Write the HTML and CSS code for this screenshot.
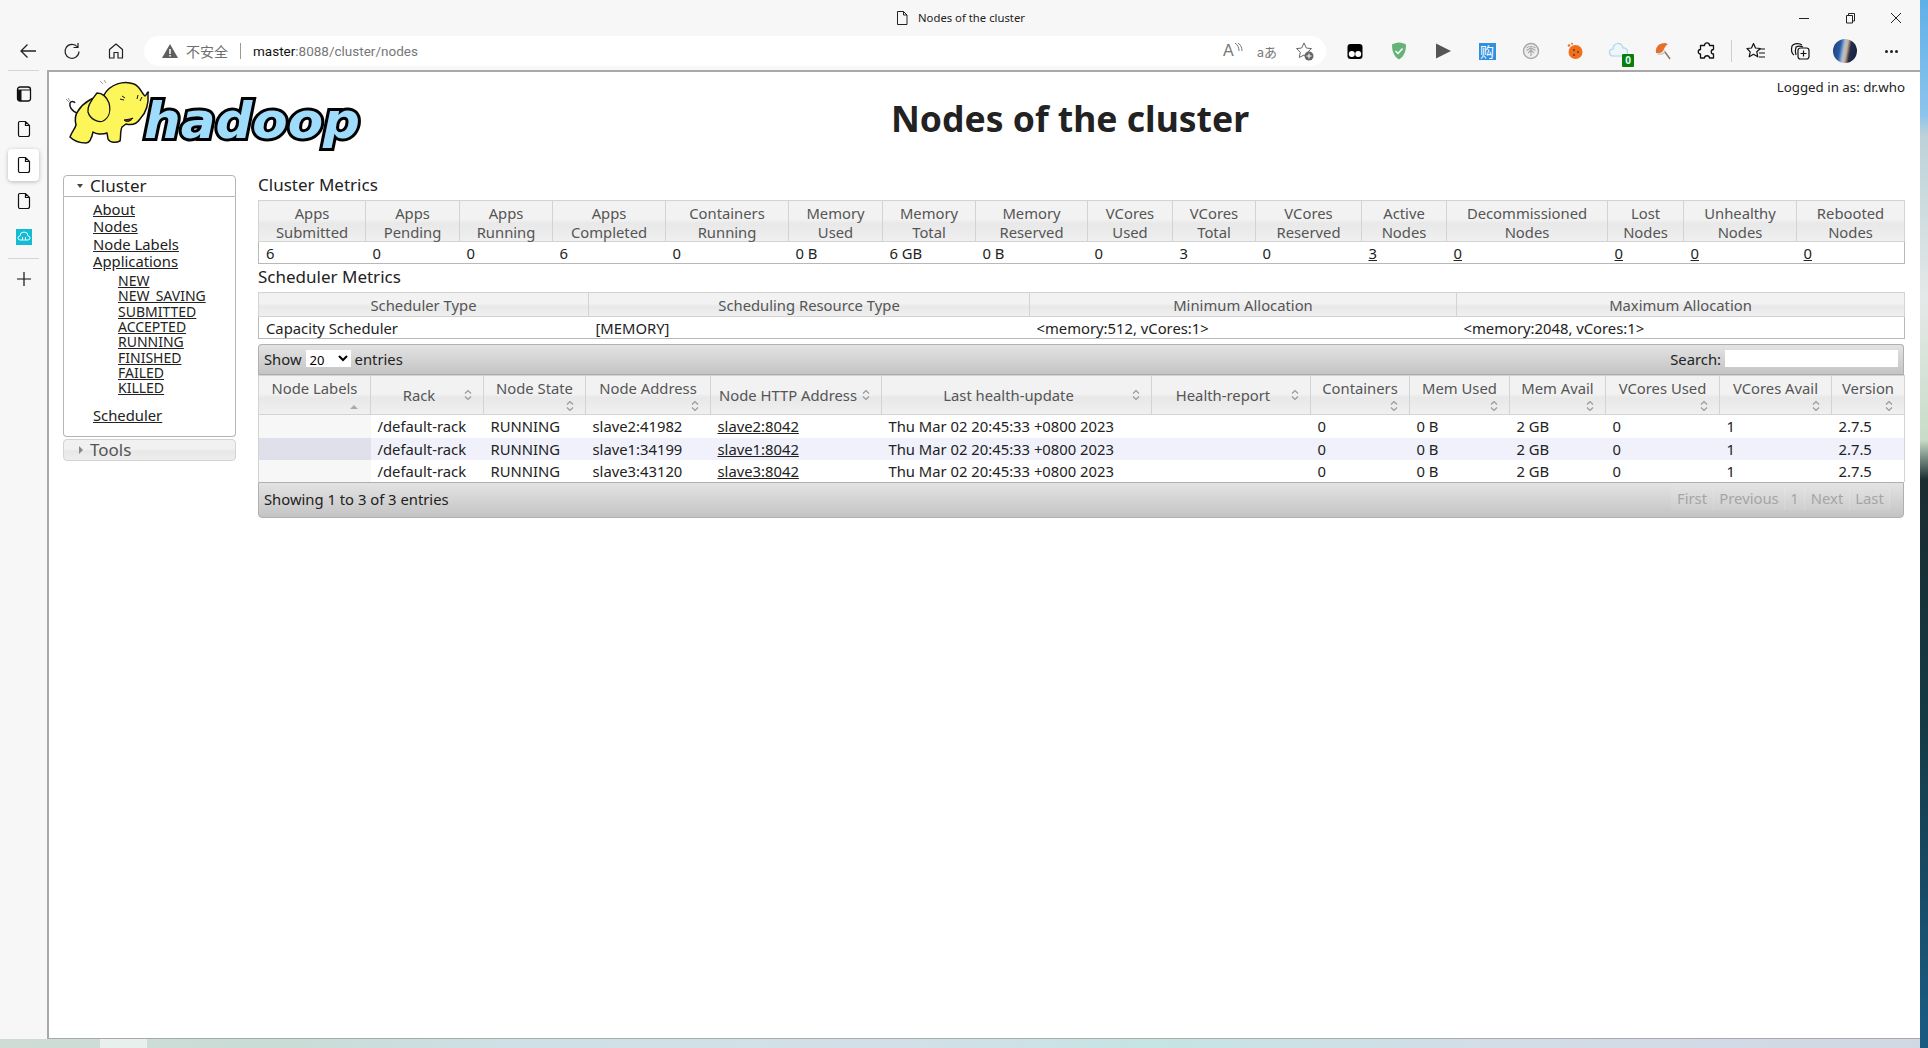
FILE: index.html
```html
<!DOCTYPE html>
<html lang="en">

<head>
    <meta charset="UTF-8">
    <title>Nodes of the cluster</title>
    <link rel="stylesheet" href="styles.css">
</head>

<body>
    <div class="browser">
        <div class="titlebar">
            <div></div>
            <div class="tab-title">
                <svg width="14" height="16" viewBox="0 0 14 16"><path d="M2.5 1.5h6l3.5 3.5v9.5h-9.500z M8.500 1.500v3.500h3.500" fill="none" stroke="#222" /></svg>
                <span>Nodes of the cluster</span>
            </div>
            <div class="win-controls">
                <svg width="46" height="16" viewBox="0 0 46 16"><path d="M18 8.500h10" stroke="#222" /></svg>
                <svg width="46" height="16" viewBox="0 0 46 16"><path d="M19.500 5.500h6v7.500h-6z M21.500 5.500v-2h6v7.500h-2" fill="none" stroke="#222" /></svg>
                <svg width="46" height="16" viewBox="0 0 46 16"><path d="M18 3l10 10M28 3l-10 10" stroke="#222" /></svg>
            </div>
        </div>

        <div class="toolbar">
            <div class="nav-btn"><svg width="20" height="20" viewBox="0 0 20 20"><path d="M18 10H3M9.500 3.500L3 10l6.500 6.500" fill="none" stroke="#222" stroke-width="1.300" /></svg></div>
            <div class="nav-btn"><svg width="20" height="20" viewBox="0 0 20 20"><path d="M15.500 6A7 7 0 1 0 17 10.500M16 2v4.500h-4.500" fill="none" stroke="#222" stroke-width="1.200" /></svg></div>
            <div class="nav-btn"><svg width="20" height="20" viewBox="0 0 20 20"><path d="M3.500 17V8.500L10 3l6.500 5.500V17h-4.500v-5.500h-4V17z" fill="none" stroke="#222" stroke-width="1.200" stroke-linejoin="round" /></svg></div>

            <div class="addr">
                <svg width="16" height="16" viewBox="0 0 16 16"><path d="M8 1L16 15H0z" fill="#5f5f5f" /><path d="M8 6v5M8 12v1.500" stroke="#fff" stroke-width="1.500" /></svg>
                <span class="insecure">不安全</span>
                <span class="addr-sep"></span>
                <span class="url"><b>master</b>:8088/cluster/nodes</span>
                <span class="addr-icons">
                    <span class="read">A<svg width="10" height="14" viewBox="0 0 10 14"><path d="M1 1c3 2 4 5 4 8M4 1c3 2 4 5 4 8" fill="none" stroke="#777" /></svg></span>
                    <span class="trans">aあ</span>
                    <svg width="20" height="20" viewBox="0 0 20 20"><path d="M10 2l2.300 5 5.200.600-3.800 3.600 1 5.300L10 14l-4.700 2.500 1-5.300L2.500 7.600 7.700 7z" fill="none" stroke="#666" /><circle cx="15" cy="15" r="4.500" fill="#666" /><path d="M15 12.500v5M12.500 15h5" stroke="#fff" /></svg>
                </span>
            </div>

            <div class="ext-list">
                <div class="ext"><svg width="20" height="20" viewBox="0 0 20 20"><rect x="2.500" y="3" width="15" height="15" rx="3" fill="#000" /><circle cx="6.800" cy="13" r="3" fill="#fff" /><circle cx="13.200" cy="13" r="3" fill="#fff" /></svg></div>
                <div class="ext"><svg width="20" height="20" viewBox="0 0 20 20"><path d="M10 1.500c3 0 5 1 7 2 0 7-2 12-7 15-5-3-7-8-7-15 2-1 4-2 7-2z" fill="#67b279" /><path d="M6.500 10l2.500 2.500 4.500-5" fill="none" stroke="#fff" stroke-width="1.500" /></svg></div>
                <div class="ext"><svg width="20" height="20" viewBox="0 0 20 20"><path d="M3 2.500l15 7.500-15 7.500z" fill="#555" /></svg></div>
                <div class="ext"><span class="gou">购</span></div>
                <div class="ext"><svg width="20" height="20" viewBox="0 0 20 20"><circle cx="10" cy="10" r="7.500" fill="#eee" stroke="#a9a9a9" stroke-width="1.500" /><path d="M10 7v8M5.500 7c2-2 7-2 9 0M5.500 9.500L10 7l4.500 2.500M7 12l3-3 3 3" fill="none" stroke="#a9a9a9" stroke-width="1.200" /></svg></div>
                <div class="ext"><svg width="20" height="20" viewBox="0 0 20 20"><circle cx="10.500" cy="11" r="7" fill="#ee6f1c" /><circle cx="4" cy="4.500" r="1.300" fill="#ee6f1c" /><circle cx="7" cy="2.800" r="1" fill="#ee6f1c" /><circle cx="9" cy="9" r="1" fill="#7b3408" /><circle cx="13" cy="11" r="1" fill="#7b3408" /><circle cx="9" cy="14" r="1" fill="#7b3408" /></svg></div>
                <div class="ext">
                    <svg width="22" height="20" viewBox="0 0 22 20"><path d="M5 15a3.500 3.500 0 0 1 0-7 5 5 0 0 1 10-1 4 4 0 0 1 1 8z" fill="#eef6fb" stroke="#a9d4ee" stroke-width="1.200" /></svg>
                    <span class="badge">0</span>
                </div>
                <div class="ext"><svg width="20" height="20" viewBox="0 0 20 20"><path d="M12 2C6 2 2 6 3 12c3 1 7 0 8-4 1-2 2-4 4-5z" fill="#e66f2e" /><path d="M5 13c3 1 5 0 7-2l-1-2" fill="none" stroke="#c9c9c9" stroke-width="1.500" /><path d="M12 11l5 7" stroke="#8a7a6a" stroke-width="1.500" /></svg></div>
                <div class="ext"><svg width="20" height="20" viewBox="0 0 20 20"><path d="M7.500 4.500c0-3.500 5-3.500 5 0h4v4c-3 0-3 4.500 0 4.500v4h-4c0-3-5-3-5 0h-4v-4c-3 0-3-4.500 0-4.500v-4z" fill="none" stroke="#111" stroke-width="1.300" stroke-linejoin="round" /></svg></div>
                <div class="ext-sep"></div>
                <div class="ext"><svg width="22" height="20" viewBox="0 0 22 20"><path d="M8.500 2.500l2 4.500 4.800.500-3.500 3.300 1 5-4.300-2.500-4.300 2.500 1-5L2 7.500 6.500 7z" fill="none" stroke="#111" stroke-width="1.200" stroke-linejoin="round" /><path d="M14 8h6M14 12h6M14 16h6" stroke="#111" stroke-width="1.200" /></svg></div>
                <div class="ext"><svg width="22" height="22" viewBox="0 0 22 22"><path d="M5 15c-3-2-3-5-2-9 1-2 5-3 8-2l2 1" fill="none" stroke="#111" stroke-width="1.200" /><path d="M7 15c-1-3-1-5 0-8 2-1 5-1 7 0" fill="none" stroke="#111" stroke-width="1.200" /><rect x="9" y="8" width="11" height="11" rx="2.500" fill="#f7f7f7" stroke="#111" stroke-width="1.200" /><path d="M14.500 10.500v6M11.500 13.500h6" stroke="#111" stroke-width="1.200" /></svg></div>
                <div class="ext avatar-wrap"><span class="avatar"></span></div>
                <div class="ext more"><span></span><span></span><span></span></div>
            </div>
        </div>

        <div class="content-row">
            <div class="rail">
                <div class="rail-sep"></div>
                <div class="rail-item short"><svg width="16" height="18" viewBox="0 0 16 18"><rect x="1.500" y="2" width="13" height="14" rx="2.500" fill="none" stroke="#111" stroke-width="1.300" /><path d="M1.500 5h13" stroke="#111" /><path d="M2 5h3.500v11H3.500a2 2 0 0 1-2-2z" fill="#111" /></svg></div>
                <div class="rail-item"><svg class="doc" width="14" height="18" viewBox="0 0 14 18"><path d="M2.500 1.500h6l4 4v9a2 2 0 0 1-2 2h-8a1.500 1.500 0 0 1-1-1.500v-12a1.500 1.500 0 0 1 1-1.500zM8.500 1.500v4h4" fill="none" stroke="#111" stroke-width="1.200" /></svg></div>
                <div class="rail-item active"><svg class="doc" width="14" height="18" viewBox="0 0 14 18"><path d="M2.500 1.500h6l4 4v9a2 2 0 0 1-2 2h-8a1.500 1.500 0 0 1-1-1.500v-12a1.500 1.500 0 0 1 1-1.500zM8.500 1.500v4h4" fill="none" stroke="#111" stroke-width="1.200" /></svg></div>
                <div class="rail-item"><svg class="doc" width="14" height="18" viewBox="0 0 14 18"><path d="M2.500 1.500h6l4 4v9a2 2 0 0 1-2 2h-8a1.500 1.500 0 0 1-1-1.500v-12a1.500 1.500 0 0 1 1-1.500zM8.500 1.500v4h4" fill="none" stroke="#111" stroke-width="1.200" /></svg></div>
                <div class="rail-item"><svg width="16" height="16" viewBox="0 0 16 16"><rect width="16" height="16" fill="#12bcd4" /><path d="M4 11a2 2 0 0 1 0-4 4 4 0 0 1 8 0 2 2 0 0 1 0 4zM6.500 8v3M9.500 8v3" fill="none" stroke="#e8fbff" /></svg></div>
                <div class="rail-sep lower"></div>
                <div class="rail-item"><svg width="16" height="16" viewBox="0 0 16 16"><path d="M8 1v14M1 8h14" stroke="#111" stroke-width="1.200" /></svg></div>
            </div>

            <div class="page">
                <div class="header">
                    <div class="logo">
                        <svg width="310" height="85" viewBox="0 0 310 85">
                            <text class="logo-text" x="84" y="63" textLength="216" lengthAdjust="spacingAndGlyphs">hadoop</text>
                            <path d="M17 38C12 36 9 32 10 28c1-2 4-2 5 0" fill="none" stroke="#111" stroke-width="1.500" />
                            <path d="M6 24l3 3M8 23l2 3M40 6l3 3M44 5l2 3" stroke="#999" />
                            <path d="M18 36c6-10 16-14 26-16C50 9 64 5 74 9c6 2 8 10 11 12 1 0 1-2 3-4 1 0 0 1 0 1 1 12-2 20-8 26-4 6-10 6-14 5l-4 3c-2 4-1 10-2 14-4 2-10 2-12-2l-1-6c-5 2-11 1-14-1-1 5-3 11-7 11-6 0-12-2-16-6 2-6 5-8 6-12-1-4-1-10 2-14z" fill="#fdf65a" stroke="#111" stroke-width="1.500" stroke-linejoin="round" />
                            <path d="M37 18c-5 6-10 14-9 19 2 7 10 11 15 9 6-3 8-10 6-18-2-5-6-10-12-10z" fill="#fdf65a" stroke="#111" stroke-width="1.300" />
                            <path d="M60 24l4 1M62 21l3 2M78 20l-1 4M82 22l-2 4" stroke="#111" />
                            <path d="M64 45c3 3 7 1 9-2l-3 1z" fill="#7a2b10" stroke="#111" />
                        </svg>
                    </div>
                    <h1>Nodes of the cluster</h1>
                    <div class="login">Logged in as: dr.who</div>
                </div>

                <div class="layout">
                    <div class="nav">
                        <div class="nav-head open"><span class="arrow-down"></span>Cluster</div>
                        <div class="nav-box">
                            <ul class="nav-links">
                                <li><a href="#">About</a></li>
                                <li><a href="#">Nodes</a></li>
                                <li><a href="#">Node Labels</a></li>
                                <li><a href="#">Applications</a>
                                    <ul class="nav-sub">
                                        <li><a href="#">NEW</a></li>
                                        <li><a href="#">NEW_SAVING</a></li>
                                        <li><a href="#">SUBMITTED</a></li>
                                        <li><a href="#">ACCEPTED</a></li>
                                        <li><a href="#">RUNNING</a></li>
                                        <li><a href="#">FINISHED</a></li>
                                        <li><a href="#">FAILED</a></li>
                                        <li><a href="#">KILLED</a></li>
                                    </ul>
                                </li>
                                <li class="sched-link"><a href="#">Scheduler</a></li>
                            </ul>
                        </div>
                        <div class="nav-head closed"><span class="arrow-right"></span>Tools</div>
                    </div>

                    <div class="main">
                        <div class="section-title first">Cluster Metrics</div>
                        <table class="info cluster-table">
                            <colgroup><col><col><col><col><col><col><col><col><col><col><col><col><col><col><col><col></colgroup>
                            <thead>
                                <tr>
                                    <th>Apps<br>Submitted</th>
                                    <th>Apps<br>Pending</th>
                                    <th>Apps<br>Running</th>
                                    <th>Apps<br>Completed</th>
                                    <th>Containers<br>Running</th>
                                    <th>Memory<br>Used</th>
                                    <th>Memory<br>Total</th>
                                    <th>Memory<br>Reserved</th>
                                    <th>VCores<br>Used</th>
                                    <th>VCores<br>Total</th>
                                    <th>VCores<br>Reserved</th>
                                    <th>Active<br>Nodes</th>
                                    <th>Decommissioned<br>Nodes</th>
                                    <th>Lost<br>Nodes</th>
                                    <th>Unhealthy<br>Nodes</th>
                                    <th>Rebooted<br>Nodes</th>
                                </tr>
                            </thead>
                            <tbody>
                                <tr>
                                    <td>6</td><td>0</td><td>0</td><td>6</td><td>0</td><td>0 B</td><td>6 GB</td><td>0 B</td><td>0</td><td>3</td><td>0</td>
                                    <td><a href="#">3</a></td><td><a href="#">0</a></td><td><a href="#">0</a></td><td><a href="#">0</a></td><td><a href="#">0</a></td>
                                </tr>
                            </tbody>
                        </table>

                        <div class="section-title">Scheduler Metrics</div>
                        <table class="info sched-table">
                            <colgroup><col><col><col><col></colgroup>
                            <thead>
                                <tr>
                                    <th>Scheduler Type</th>
                                    <th>Scheduling Resource Type</th>
                                    <th>Minimum Allocation</th>
                                    <th>Maximum Allocation</th>
                                </tr>
                            </thead>
                            <tbody>
                                <tr>
                                    <td>Capacity Scheduler</td>
                                    <td>[MEMORY]</td>
                                    <td>&lt;memory:512, vCores:1&gt;</td>
                                    <td>&lt;memory:2048, vCores:1&gt;</td>
                                </tr>
                            </tbody>
                        </table>

                        <div class="nodes-wrap">
                            <div class="bar bar-top">
                                <label class="bar-label">Show
                                    <select>
                                        <option>20</option>
                                    </select>
                                    entries</label>
                                <label class="bar-label">Search: <input type="text"></label>
                            </div>
                            <table class="nodes-table">
                                <colgroup><col><col><col><col><col><col><col><col><col><col><col><col><col></colgroup>
                                <thead>
                                    <tr>
                                        <th class="sorted">Node Labels</th>
                                        <th class="sort side">Rack</th>
                                        <th class="sort">Node State</th>
                                        <th class="sort">Node Address</th>
                                        <th class="sort side">Node HTTP Address</th>
                                        <th class="sort side">Last health-update</th>
                                        <th class="sort side">Health-report</th>
                                        <th class="sort">Containers</th>
                                        <th class="sort">Mem Used</th>
                                        <th class="sort">Mem Avail</th>
                                        <th class="sort">VCores Used</th>
                                        <th class="sort">VCores Avail</th>
                                        <th class="sort">Version</th>
                                    </tr>
                                </thead>
                                <tbody>
                                    <tr>
                                        <td class="first-col"></td>
                                        <td>/default-rack</td>
                                        <td>RUNNING</td>
                                        <td>slave2:41982</td>
                                        <td><a href="#">slave2:8042</a></td>
                                        <td>Thu Mar 02 20:45:33 +0800 2023</td>
                                        <td></td>
                                        <td>0</td>
                                        <td>0 B</td>
                                        <td>2 GB</td>
                                        <td>0</td>
                                        <td>1</td>
                                        <td>2.7.5</td>
                                    </tr>
                                    <tr class="even">
                                        <td class="first-col"></td>
                                        <td>/default-rack</td>
                                        <td>RUNNING</td>
                                        <td>slave1:34199</td>
                                        <td><a href="#">slave1:8042</a></td>
                                        <td>Thu Mar 02 20:45:33 +0800 2023</td>
                                        <td></td>
                                        <td>0</td>
                                        <td>0 B</td>
                                        <td>2 GB</td>
                                        <td>0</td>
                                        <td>1</td>
                                        <td>2.7.5</td>
                                    </tr>
                                    <tr>
                                        <td class="first-col"></td>
                                        <td>/default-rack</td>
                                        <td>RUNNING</td>
                                        <td>slave3:43120</td>
                                        <td><a href="#">slave3:8042</a></td>
                                        <td>Thu Mar 02 20:45:33 +0800 2023</td>
                                        <td></td>
                                        <td>0</td>
                                        <td>0 B</td>
                                        <td>2 GB</td>
                                        <td>0</td>
                                        <td>1</td>
                                        <td>2.7.5</td>
                                    </tr>
                                </tbody>
                            </table>
                            <div class="bar bar-bottom">
                                <span>Showing 1 to 3 of 3 entries</span>
                                <div class="pager">
                                    <span class="pg-first">First</span>
                                    <span class="pg-prev">Previous</span>
                                    <span class="pg-num">1</span>
                                    <span class="pg-next">Next</span>
                                    <span class="pg-last">Last</span>
                                </div>
                            </div>
                        </div>
                    </div>
                </div>
            </div>
        </div>
    </div>
    <div class="taskbar">
        <div class="task-active"></div>
    </div>
</body>

</html>
```
FILE: styles.css
```css
html,
body {
    height: 100%;
}

body {
    margin: 0;
    height: 1048px;
    overflow: hidden;
    font-family: "Noto Sans", Arial, sans-serif;
    font-size: 14.8px;
    color: #222;
    background: linear-gradient(#5fb0e8 0, #8cc4ec 115px, #bcd2d8 135px, #e4e9e8 300px, #c8dcc8 440px, #1a2c30 480px, #143a44 720px, #1a5a80 1020px);
}

.browser {
    width: 1920px;
    height: 1039px;
    display: flex;
    flex-direction: column;
    background-color: #f7f7f7;
}

/* title bar */

.titlebar {
    height: 35px;
    display: grid;
    grid-template-columns: 1fr auto 1fr;
    align-items: center;
    flex-shrink: 0;
}

.tab-title {
    display: flex;
    align-items: center;
    gap: 9px;
    font-size: 11.300px;
    color: #222;
}

.win-controls {
    display: flex;
    justify-content: flex-end;
    padding-right: 1px;
}

/* toolbar */

.toolbar {
    height: 35px;
    display: flex;
    align-items: flex-start;
    padding-left: 6px;
    flex-shrink: 0;
}

.nav-btn {
    width: 44px;
    height: 32px;
    display: flex;
    align-items: center;
    justify-content: center;
}

.addr {
    width: 1164px;
    height: 30px;
    margin: 1px 0 0 6px;
    padding: 0 0 0 18px;
    display: flex;
    align-items: center;
    background-color: #fff;
    border-radius: 15px;
    font-size: 12.500px;
    color: #777;
}

.insecure {
    margin-left: 8px;
    font-family: "Noto Sans CJK SC", sans-serif;
    font-size: 14px;
    color: #6e6e6e;
}

.addr-sep {
    width: 1px;
    height: 16px;
    margin: 0 12px;
    background-color: #999;
}

.url {
    font-family: Roboto, sans-serif;
    font-size: 13.500px;
}

.url b {
    font-weight: normal;
    color: #111;
}

.addr-icons {
    margin-left: auto;
    padding-right: 12px;
    display: flex;
    align-items: center;
    gap: 13px;
}

.read {
    display: flex;
    align-items: flex-start;
    font-size: 16px;
    font-family: "Liberation Sans", sans-serif;
    color: #777;
}

.trans {
    margin-right: 4px;
    font-family: "Noto Sans CJK JP", sans-serif;
    font-size: 13px;
    color: #777;
}

.ext-list {
    display: flex;
    align-items: center;
    height: 32px;
    margin-left: 7px;
}

.ext {
    position: relative;
    width: 44px;
    height: 32px;
    display: flex;
    align-items: center;
    justify-content: center;
}

.ext-sep {
    width: 1px;
    height: 22px;
    margin: 0 2px;
    background-color: #cfcfcf;
}

.gou {
    width: 17px;
    height: 17px;
    display: flex;
    align-items: center;
    justify-content: center;
    background-color: #2f8fe0;
    font-family: "Noto Sans CJK SC", sans-serif;
    font-size: 14px;
    line-height: 1;
    color: #fff;
}

.badge {
    position: absolute;
    right: 7px;
    bottom: 0;
    width: 12px;
    height: 13px;
    background-color: #0a7d0a;
    border-radius: 1px;
    font-size: 10px;
    line-height: 13px;
    font-weight: bold;
    text-align: center;
    color: #dff;
}

.avatar-wrap {
    margin-left: 1px;
}

.avatar {
    width: 24px;
    height: 24px;
    border-radius: 50%;
    background: linear-gradient(100deg, #1d3f78 0, #2a5aa0 30%, #a9c0dc 45%, #d0b090 55%, #232c48 68%, #142042 100%);
}

.more {
    gap: 2px;
    margin-left: 2px;
}

.more span {
    width: 3px;
    height: 3px;
    border-radius: 50%;
    background-color: #222;
}

/* left rail and page frame */

.content-row {
    flex: 1;
    display: flex;
    min-height: 0;
}

.rail {
    width: 47px;
    flex-shrink: 0;
    display: flex;
    flex-direction: column;
    align-items: center;
    gap: 4px;
}

.rail-sep {
    width: 31px;
    height: 1px;
    margin-bottom: 4px;
    background-color: #d5d5d5;
}

.rail-sep.lower {
    margin: 1px 0 0;
}

.rail-item {
    width: 31px;
    height: 32px;
    display: flex;
    align-items: center;
    justify-content: center;
    flex-shrink: 0;
}

.rail-item.short {
    height: 30px;
}

.rail-item.active {
    background-color: #fff;
    border-radius: 4px;
    box-shadow: 0 1px 4px rgba(0, 0, 0, 0.25);
}

.page {
    flex: 1;
    min-width: 0;
    display: flex;
    flex-direction: column;
    background-color: #fff;
    border-top: 2px solid #a9a9a9;
    border-left: 2px solid #a9a9a9;
    border-bottom: 1px solid #a9a9a9;
}

/* page header */

.header {
    height: 98px;
    display: flex;
    flex-shrink: 0;
}

.logo {
    width: 321px;
    padding: 3px 0 0 11px;
    box-sizing: border-box;
}

.logo-text {
    font-family: "DejaVu Sans", sans-serif;
    font-size: 50px;
    font-weight: bold;
    font-style: italic;
    fill: #9fdcfb;
    stroke: #000;
    stroke-width: 6px;
    paint-order: stroke;
}

h1 {
    flex: 1;
    margin: 26px 0 0;
    font-size: 35.500px;
    line-height: 40px;
    text-align: center;
    color: #222;
}

.login {
    width: 135px;
    padding: 6px 15px 0 0;
    font-size: 13.300px;
    line-height: 18px;
    text-align: right;
    white-space: nowrap;
}

/* sidebar */

.layout {
    display: flex;
    padding: 0 15px 0 14px;
    gap: 22px;
}

.nav {
    width: 173px;
    flex-shrink: 0;
    padding-top: 5px;
}

.nav-head {
    height: 22px;
    box-sizing: border-box;
    display: flex;
    align-items: center;
    font-size: 17px;
    line-height: 20px;
    border: 1px solid #b5b5b5;
    padding-left: 13px;
}

.nav-head.open {
    border-radius: 4px 4px 0 0;
    background-color: #fff;
    color: #222;
}

.nav-head.closed {
    margin-top: 2px;
    border-color: #d3d3d3;
    border-radius: 4px;
    background: linear-gradient(#f1f1f1 45%, #e7e7e7 55%, #eee 100%);
    color: #555;
}

.arrow-down {
    width: 0;
    height: 0;
    margin-right: 7px;
    border-style: solid;
    border-width: 4px 3.500px 0;
    border-color: #444 transparent transparent;
}

.arrow-right {
    width: 0;
    height: 0;
    margin: 0 7px 0 2px;
    border-style: solid;
    border-width: 4px 0 4px 4px;
    border-color: transparent transparent transparent #888;
}

.nav-box {
    height: 240px;
    box-sizing: border-box;
    border: 1px solid #b5b5b5;
    border-top: 0;
    border-radius: 0 0 4px 4px;
}

.nav-links,
.nav-sub {
    list-style: none;
    margin: 0;
    padding: 0;
}

.nav-links {
    padding: 4px 0 0 29px;
    font-size: 14.800px;
    line-height: 17.300px;
}

.nav-sub {
    margin: 3px 0 0;
    padding-left: 25px;
    font-size: 14px;
    line-height: 15.300px;
}

.sched-link {
    margin-top: 11px;
}

a {
    color: #222;
}

/* tables */

.main {
    width: 1646px;
    flex-shrink: 0;
}

.section-title {
    height: 28px;
    font-size: 17px;
    line-height: 26px;
}

.section-title.first {
    height: 30px;
    line-height: 30px;
}

table {
    width: 1646px;
    table-layout: fixed;
    border-collapse: collapse;
    white-space: nowrap;
}

th {
    padding: 0;
    font-weight: normal;
    color: #555;
    background: linear-gradient(#f2f2f2 45%, #e8e8e8 55%, #f0f0f0 100%);
    border: 1px solid #d3d3d3;
}

td {
    padding: 0 0 0 7px;
    overflow: hidden;
}

.info {
    border: 1px solid #b8b8b8;
}

.info th {
    line-height: 18.500px;
    padding-top: 1px;
}

.cluster-table th {
    padding-top: 3px;
}

.cluster-table td {
    padding-top: 1px;
}

.cluster-table thead tr {
    height: 41px;
}

.cluster-table tbody tr {
    height: 22px;
}

.sched-table thead tr {
    height: 24px;
}

.sched-table tbody tr {
    height: 22px;
}

.cluster-table col:nth-child(1) { width: 107px; }
.cluster-table col:nth-child(2) { width: 94px; }
.cluster-table col:nth-child(3) { width: 93px; }
.cluster-table col:nth-child(4) { width: 113px; }
.cluster-table col:nth-child(5) { width: 123px; }
.cluster-table col:nth-child(6) { width: 94px; }
.cluster-table col:nth-child(7) { width: 93px; }
.cluster-table col:nth-child(8) { width: 112px; }
.cluster-table col:nth-child(9) { width: 85px; }
.cluster-table col:nth-child(10) { width: 83px; }
.cluster-table col:nth-child(11) { width: 106px; }
.cluster-table col:nth-child(12) { width: 85px; }
.cluster-table col:nth-child(13) { width: 161px; }
.cluster-table col:nth-child(14) { width: 76px; }
.cluster-table col:nth-child(15) { width: 113px; }
.cluster-table col:nth-child(16) { width: 108px; }

.sched-table col:nth-child(1) { width: 330px; }
.sched-table col:nth-child(2) { width: 441px; }
.sched-table col:nth-child(3) { width: 427px; }
.sched-table col:nth-child(4) { width: 448px; }

.nodes-table col:nth-child(1) { width: 112px; }
.nodes-table col:nth-child(2) { width: 113px; }
.nodes-table col:nth-child(3) { width: 102px; }
.nodes-table col:nth-child(4) { width: 125px; }
.nodes-table col:nth-child(5) { width: 171px; }
.nodes-table col:nth-child(6) { width: 270px; }
.nodes-table col:nth-child(7) { width: 159px; }
.nodes-table col:nth-child(8) { width: 99px; }
.nodes-table col:nth-child(9) { width: 100px; }
.nodes-table col:nth-child(10) { width: 96px; }
.nodes-table col:nth-child(11) { width: 114px; }
.nodes-table col:nth-child(12) { width: 112px; }
.nodes-table col:nth-child(13) { width: 73px; }

/* nodes table and its bars */

.nodes-wrap {
    margin-top: 5px;
}

.bar {
    display: flex;
    align-items: center;
    justify-content: space-between;
    box-sizing: border-box;
    padding: 0 5px;
    border: 1px solid #b0b0b0;
    background: linear-gradient(#e3e3e3, #c4c4c4);
}

.bar-top {
    height: 31px;
    padding-bottom: 2px;
    border-radius: 4px 4px 0 0;
    border-bottom-color: #aaa;
}

.bar-bottom {
    height: 36px;
    padding-bottom: 2px;
    border-radius: 0 0 4px 4px;
}

.bar-label {
    display: flex;
    align-items: center;
    gap: 4px;
}

select {
    width: 45px;
    height: 17px;
    padding: 0;
    border: 0;
    background-color: #fff;
    font-family: inherit;
    font-size: 13px;
}

input {
    width: 173px;
    height: 17px;
    padding: 0;
    border: 0;
    background-color: #fff;
}

.nodes-table {
    border-left: 1px solid #d3d3d3;
    border-right: 1px solid #d3d3d3;
}

.nodes-table thead tr {
    height: 39px;
}

.nodes-table tbody tr {
    height: 22px;
}

.nodes-table tbody tr:first-child {
    height: 23px;
}

.nodes-table th {
    position: relative;
    line-height: 19px;
    vertical-align: top;
    padding-top: 3px;
}

.nodes-table th.side {
    vertical-align: middle;
    padding: 0 16px 0 0;
}

.nodes-table td {
    background-color: #fff;
}

.nodes-table .first-col {
    background-color: #f7f7f7;
}

.nodes-table .even td {
    background-color: #f0f1fb;
}

.nodes-table .even .first-col {
    background-color: #dfe0ea;
}

.sort::after {
    content: "";
    position: absolute;
    right: 11px;
    bottom: 2px;
    width: 8px;
    height: 12px;
    background: url("data:image/svg+xml,%3Csvg xmlns='http://www.w3.org/2000/svg' width='8' height='12'%3E%3Cpath d='M1 4.500L4 1.500l3 3M1 7.500l3 3 3-3' fill='none' stroke='%23999' stroke-width='1.200'/%3E%3C/svg%3E") no-repeat;
}

.side::after {
    bottom: 13px;
}

.sorted::after {
    content: "";
    position: absolute;
    right: 12px;
    bottom: 5px;
    width: 0;
    height: 0;
    border-style: solid;
    border-width: 0 4px 4px;
    border-color: transparent transparent #aaa;
}

.pager {
    display: flex;
    margin-right: 8px;
    height: 23px;
    line-height: 23px;
    color: #a5a5a5;
    background-color: rgba(255, 255, 255, 0.08);
    border-radius: 3px;
}

.pager span {
    box-sizing: border-box;
    text-align: center;
    border-right: 1px solid rgba(255, 255, 255, 0.15);
}

.pg-first { width: 43px; }
.pg-prev { width: 71px; }
.pg-num { width: 20px; }
.pg-next { width: 45px; }
.pg-last { width: 40px; }

/* bit of the desktop under the window */

.taskbar {
    height: 9px;
    width: 1920px;
    padding-left: 100px;
    box-sizing: border-box;
    background: linear-gradient(90deg, #cfdcd6 0, #c9dcd6 300px, #cfe0e6 500px, #d3dfe8 900px, #c5e4e4 1150px, #d3dde8 1500px, #d0d8e4 1920px);
}

.task-active {
    width: 47px;
    height: 9px;
    background-color: #e8f0ee;
}
```
